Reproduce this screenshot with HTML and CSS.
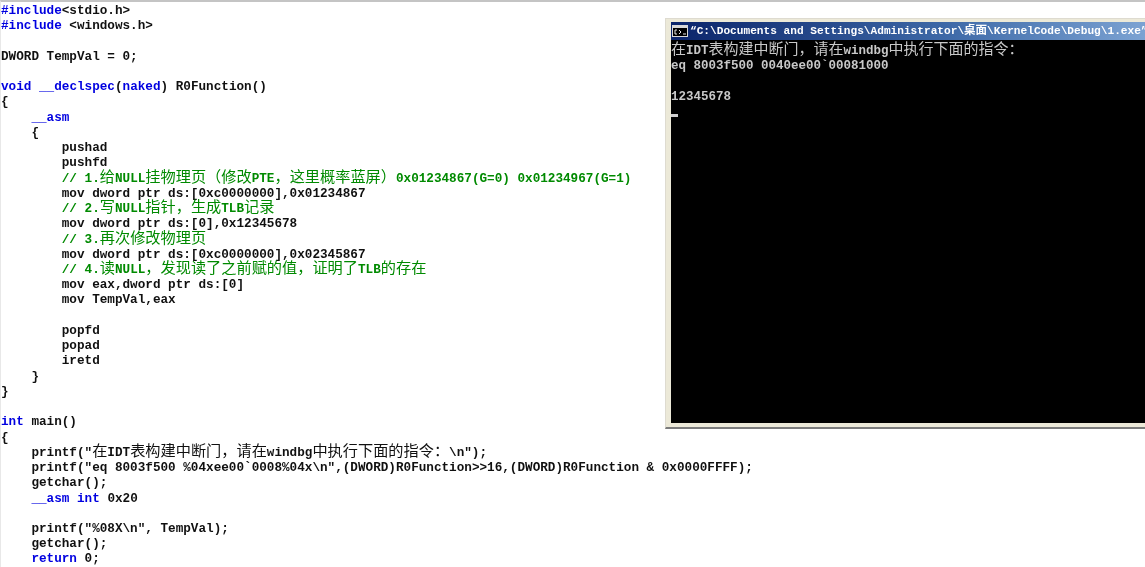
FILE: index.html
```html
<!DOCTYPE html>
<html lang="zh">
<head>
<meta charset="utf-8">
<title>KernelCode</title>
<link rel="stylesheet" href="styles.css">
</head>
<body>
<main class="screen">
<pre class="code"><b class="kw">#include</b>&lt;stdio.h&gt;
<b class="kw">#include</b> &lt;windows.h&gt;

DWORD TempVal = 0;

<b class="kw">void</b> <b class="kw">__declspec</b>(<b class="kw">naked</b>) R0Function()
{
    <b class="kw">__asm</b>
    {
        pushad
        pushfd
        <span class="cm">// 1.<span class="zh">给</span>NULL<span class="zh">挂物理页（修改</span>PTE<span class="zh">，这里概率蓝屏）</span>0x01234867(G=0) 0x01234967(G=1)</span>
        mov dword ptr ds:[0xc0000000],0x01234867
        <span class="cm">// 2.<span class="zh">写</span>NULL<span class="zh">指针，生成</span>TLB<span class="zh">记录</span></span>
        mov dword ptr ds:[0],0x12345678
        <span class="cm">// 3.<span class="zh">再次修改物理页</span></span>
        mov dword ptr ds:[0xc0000000],0x02345867
        <span class="cm">// 4.<span class="zh">读</span>NULL<span class="zh">，发现读了之前赋的值，证明了</span>TLB<span class="zh">的存在</span></span>
        mov eax,dword ptr ds:[0]
        mov TempVal,eax

        popfd
        popad
        iretd
    }
}

<b class="kw">int</b> main()
{
    printf("<span class="zh">在</span>IDT<span class="zh">表构建中断门，请在</span>windbg<span class="zh">中执行下面的指令：</span>\n");
    printf("eq 8003f500 %04xee00`0008%04x\n",(DWORD)R0Function&gt;&gt;16,(DWORD)R0Function &amp; 0x0000FFFF);
    getchar();
    <b class="kw">__asm</b> <b class="kw">int</b> 0x20

    printf("%08X\n", TempVal);
    getchar();
    <b class="kw">return</b> 0;
</pre>
<section class="console">
<header class="titlebar">
<svg class="app-icon" viewBox="0 0 16 12" width="16" height="12" aria-hidden="true"><rect width="16" height="12" fill="#d8d8d8"/><rect x="1" y="3" width="14" height="8" fill="#000"/><path d="M3 5h2M3 5v4M3 9h2M7 5l2 2-2 2M11 9h3" stroke="#e8e8e8" fill="none"/></svg>
<span class="title">“C:\Documents and Settings\Administrator\<span class="title-zh">桌面</span>\KernelCode\Debug\1.exe”</span>
</header>
<pre class="output"><span class="zh-con">在</span>IDT<span class="zh-con">表构建中断门，请在</span>windbg<span class="zh-con">中执行下面的指令：</span>
eq 8003f500 0040ee00`00081000

12345678
<i class="cursor"></i></pre>
</section>
</main>
</body>
</html>
```
FILE: styles.css
```css
html, body {
  margin: 0;
  padding: 0;
  background: #fff;
}

.screen {
  position: relative;
  width: 1145px;
  height: 567px;
  overflow: hidden;
  box-sizing: border-box;
  border-top: 2px solid #c4c4c4;
  border-left: 1px solid #e8e8e8;
}

.code {
  margin: 0;
  padding: 1px 0 0;
  font-family: "Liberation Mono", monospace;
  font-weight: 700;
  font-size: 12.67px;
  line-height: 15.24px;
  color: #101010;
  filter: blur(0.25px);
}

.kw {
  color: #0000e0;
}

.cm {
  color: #008a00;
}

.zh {
  font-family: "Noto Sans CJK SC", sans-serif;
  font-weight: 400;
  font-size: 15.2px;
  line-height: 1px;
}

.console {
  position: absolute;
  left: 664px;
  top: 16px;
  width: 520px;
  height: 411px;
  box-sizing: border-box;
  background: #ece9d8;
  border: 1px solid #dedbd0;
  border-bottom: 2px solid #7c7c7c;
  padding: 3px 5px 4px;
  display: flex;
  flex-direction: column;
}

.titlebar {
  height: 18px;
  flex: none;
  background: linear-gradient(90deg, #0a246a 0%, #3f6aa8 55%, #a6caf0 120%);
  display: flex;
  align-items: center;
  gap: 2px;
  padding-left: 1px;
  overflow: hidden;
  white-space: nowrap;
}

.app-icon {
  flex: none;
}

.title {
  font-family: "Liberation Mono", monospace;
  font-weight: 700;
  font-size: 11.15px;
  color: #fff;
  filter: blur(0.2px);
}

.title-zh {
  font-family: "Noto Sans CJK SC", sans-serif;
  font-size: 11.5px;
  line-height: 1px;
}

.output {
  flex: 1;
  margin: 0;
  padding: 4px 0 0;
  background: #000;
  color: #c8c8c8;
  font-family: "Liberation Mono", monospace;
  font-weight: 700;
  font-size: 12.5px;
  line-height: 15.2px;
  filter: blur(0.25px);
}

.zh-con {
  font-family: "Noto Sans CJK SC", sans-serif;
  font-weight: 400;
  font-size: 15px;
  line-height: 1px;
}

.cursor {
  display: inline-block;
  width: 7px;
  height: 3px;
  background: #d0d0d0;
  vertical-align: -2px;
}
```
